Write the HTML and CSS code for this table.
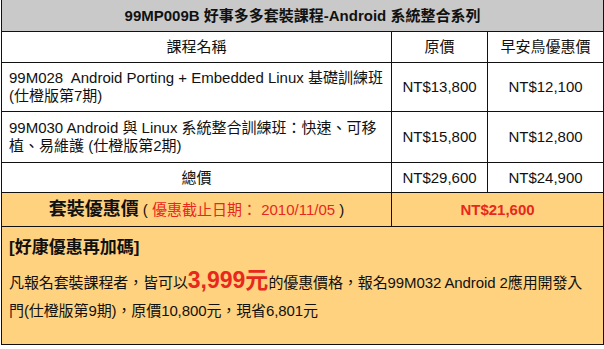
FILE: index.html
```html
<!DOCTYPE html>
<html lang="zh-Hant">
<head>
<meta charset="utf-8">
<link rel="stylesheet" href="styles.css">
</head>
<body>
<table class="pack">
  <colgroup>
    <col class="c-name">
    <col class="c-orig">
    <col class="c-early">
  </colgroup>
  <tr class="title-row">
    <th colspan="3">99MP009B 好事多多套裝課程-Android 系統整合系列</th>
  </tr>
  <tr class="head-row">
    <td class="center">課程名稱</td>
    <td class="center">原價</td>
    <td class="center">早安鳥優惠價</td>
  </tr>
  <tr class="course course-a">
    <td class="name">99M028&nbsp; Android Porting + Embedded Linux 基礎訓練班 (仕橙版第7期)</td>
    <td class="center">NT$13,800</td>
    <td class="center">NT$12,100</td>
  </tr>
  <tr class="course course-b">
    <td class="name">99M030 Android 與 Linux 系統整合訓練班：快速、可移植、易維護 (仕橙版第2期)</td>
    <td class="center">NT$15,800</td>
    <td class="center">NT$12,800</td>
  </tr>
  <tr class="total-row">
    <td class="center">總價</td>
    <td class="center">NT$29,600</td>
    <td class="center">NT$24,900</td>
  </tr>
  <tr class="promo-row">
    <td class="center"><span class="promo-label">套裝優惠價</span> ( <span class="red">優惠截止日期： 2010/11/05</span> )</td>
    <td class="center promo-price" colspan="2">NT$21,600</td>
  </tr>
  <tr class="bonus-row">
    <td colspan="3">
      <div class="bonus">
        <div class="bonus-title">[好康優惠再加碼]</div>
        <p class="bonus-text">凡報名套裝課程者，皆可以<span class="big-red">3,999元</span>的優惠價格，報名99M032 Android 2應用開發入門(仕橙版第9期)，原價10,800元，現省6,801元</p>
      </div>
    </td>
  </tr>
</table>
</body>
</html>
```

FILE: styles.css
```css
html, body {
  margin: 0;
  padding: 0;
  background: #ffffff;
}

body {
  font-family: "Liberation Sans", "Noto Sans CJK TC", sans-serif;
  font-size: 15px;
  color: #111111;
}

.pack {
  border-collapse: collapse;
  width: 602px;
  margin: -1px 0 0 1px;
  table-layout: fixed;
}

.c-name { width: 390px; }
.c-orig { width: 96px; }
.c-early { width: 116px; }

.pack th,
.pack td {
  border: 1px solid #111111;
  padding: 0 7px;
  line-height: 18px;
}

.center { text-align: center; }

.title-row th {
  background: #c9c9c9;
  height: 31px;
  font-weight: bold;
  font-size: 15px;
  padding: 0;
}

.head-row td { height: 30px; }

.course-a td { height: 48px; }
.course-b td { height: 50px; }

.name { text-align: left; }

.total-row td { height: 29px; }

.promo-row td {
  background: #ffd27f;
  height: 33px;
  line-height: 18px;
}

.promo-label {
  font-size: 18px;
  font-weight: bold;
  line-height: 18px;
}

.red { color: #e8281c; }

.promo-price {
  color: #e8281c;
  font-weight: bold;
}

.pack .bonus-row td {
  background: #ffd27f;
  vertical-align: top;
  padding: 0;
}

.bonus {
  box-sizing: border-box;
  height: 117px;
  padding: 10px 7px 0;
  overflow: hidden;
}

.bonus-title {
  font-size: 17px;
  font-weight: bold;
  line-height: 22px;
}

.bonus-text {
  margin: 10px 0 0;
  line-height: 28px;
  letter-spacing: -0.1px;
}

.big-red {
  color: #e8281c;
  font-weight: bold;
  font-size: 23px;
  line-height: 20px;
  letter-spacing: 0;
}
```
